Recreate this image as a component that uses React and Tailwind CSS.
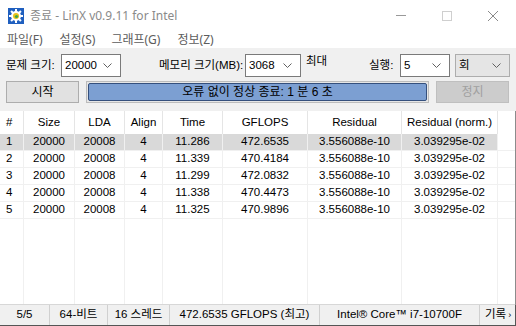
import React from 'react';

const cols = [
  { key: 'n', label: '#', w: 'w-[24px]', align: 'justify-start pl-[6px]' },
  { key: 'size', label: 'Size', w: 'w-[51px]' },
  { key: 'lda', label: 'LDA', w: 'w-[50px]' },
  { key: 'align', label: 'Align', w: 'w-[38px]' },
  { key: 'time', label: 'Time', w: 'w-[60px]' },
  { key: 'gflops', label: 'GFLOPS', w: 'w-[85px]' },
  { key: 'res', label: 'Residual', w: 'w-[94px]' },
  { key: 'norm', label: 'Residual (norm.)', w: 'w-[96px]' },
];

const rows = [
  { n: '1', size: '20000', lda: '20008', align: '4', time: '11.286', gflops: '472.6535', res: '3.556088e-10', norm: '3.039295e-02' },
  { n: '2', size: '20000', lda: '20008', align: '4', time: '11.339', gflops: '470.4184', res: '3.556088e-10', norm: '3.039295e-02' },
  { n: '3', size: '20000', lda: '20008', align: '4', time: '11.299', gflops: '472.0832', res: '3.556088e-10', norm: '3.039295e-02' },
  { n: '4', size: '20000', lda: '20008', align: '4', time: '11.338', gflops: '470.4473', res: '3.556088e-10', norm: '3.039295e-02' },
  { n: '5', size: '20000', lda: '20008', align: '4', time: '11.325', gflops: '470.9896', res: '3.556088e-10', norm: '3.039295e-02' },
];

const Chevron = () => (
  <svg width="9" height="5" viewBox="0 0 9 5" className="shrink-0">
    <path d="M0.5 0.5 L4.5 4.5 L8.5 0.5" fill="none" stroke="#606060" strokeWidth="1" />
  </svg>
);

const Combo = ({ value, width, gray }) => (
  <div className={`${width} h-[23px] flex items-center justify-between pl-[3px] pr-[8px] border text-[11.5px] ${gray ? 'bg-[#e5e5e5] border-[#adadad]' : 'bg-white border-[#7a7a7a]'}`}>
    <span>{value}</span>
    <Chevron />
  </div>
);

const AppIcon = () => (
  <svg width="16" height="16" viewBox="0 0 16 16">
    <rect x="0" y="0" width="16" height="16" fill="#1f5fbf" />
    <g fill="#ffffff">
      <circle cx="8" cy="8" r="5" />
      <rect x="7" y="1" width="2" height="14" />
      <rect x="1" y="7" width="14" height="2" />
      <rect x="7" y="1" width="2" height="14" transform="rotate(45 8 8)" />
      <rect x="7" y="1" width="2" height="14" transform="rotate(-45 8 8)" />
    </g>
    <circle cx="8" cy="8" r="3" fill="#e8c21a" />
    <circle cx="8.5" cy="8.5" r="1.6" fill="#3fa64a" />
  </svg>
);

export default function App() {
  return (
    <div className="w-[516px] h-[326px] flex flex-col bg-white overflow-hidden text-[11.5px] text-black font-['Liberation_Sans','Noto_Sans_CJK_KR',sans-serif] leading-none">
      {/* title bar */}
      <div className="h-[31px] flex items-center shrink-0 font-['Noto_Sans','Noto_Sans_CJK_KR',sans-serif]">
        <div className="ml-[8px] mr-[6px]"><AppIcon /></div>
        <span className="text-[#8a8a8a] text-[12px]">종료 - LinX v0.9.11 for Intel</span>
        <div className="ml-auto flex items-center h-full">
          <div className="w-[46px] h-full flex items-center justify-center">
            <div className="w-[10px] h-px bg-[#999]" />
          </div>
          <div className="w-[46px] h-full flex items-center justify-center">
            <div className="w-[10px] h-[10px] border border-[#cfcfcf]" />
          </div>
          <div className="w-[46px] h-full flex items-center justify-center">
            <svg width="10" height="10" viewBox="0 0 10 10">
              <path d="M0 0 L10 10 M10 0 L0 10" stroke="#8a8a8a" strokeWidth="1" />
            </svg>
          </div>
        </div>
      </div>

      {/* menu bar */}
      <div className="h-[17px] flex items-center shrink-0 text-[#5c5c5c] text-[12px] font-['Noto_Sans','Noto_Sans_CJK_KR',sans-serif]">
        <span className="ml-[7px]">파일(F)</span>
        <span className="ml-[17px]">설정(S)</span>
        <span className="ml-[16px]">그래프(G)</span>
        <span className="ml-[17px]">정보(Z)</span>
      </div>

      {/* toolbar */}
      <div className="h-[63px] shrink-0 bg-[#f0f0f0] pt-[6px]">
        <div className="flex items-center h-[23px] whitespace-nowrap">
          <span className="ml-[6px] w-[55px]">문제 크기:</span>
          <Combo value="20000" width="w-[60px]" />
          <span className="ml-[38px] w-[86px]">메모리 크기(MB):</span>
          <Combo value="3068" width="w-[56px]" />
          <span className="ml-[5px] w-[63px] self-start pt-[2px]">최대</span>
          <span className="w-[31px]">실행:</span>
          <Combo value="5" width="w-[50px]" />
          <div className="ml-[5px]"><Combo value="회" width="w-[55px]" gray /></div>
        </div>
        <div className="flex items-center h-[22px] mt-[4px] text-[12px]">
          <button className="ml-[6px] w-[73px] h-full bg-[#e1e1e1] border border-[#adadad]">시작</button>
          <div className="ml-[7px] w-[343px] h-full border border-[#bcbcbc] bg-[#e6e6e6] p-px">
            <div className="w-full h-full rounded-[2px] border border-[#35507d] bg-[#7c9fd2] flex items-center justify-center">
              오류 없이 정상 종료: 1 분 6 초
            </div>
          </div>
          <button className="ml-[7px] w-[73px] h-full bg-[#cccccc] border border-[#bfbfbf] text-[#a0a0a0]">정지</button>
        </div>
      </div>

      {/* table */}
      <div className="flex-1 flex flex-col border-r border-[#8c8c8c] min-h-0 text-[11.5px]">
        <div className="flex h-[23px] shrink-0">
          {cols.map(c => (
            <div key={c.key} className={`${c.w} shrink-0 flex items-center ${c.align || 'justify-center'} border-r border-[#e5e5e5]`}>
              {c.label}
            </div>
          ))}
          <div className="flex-1" />
        </div>
        {rows.map((r, i) => (
          <div key={r.n} className="flex h-[17px] shrink-0 border-b border-[#f0f0f0]">
            {cols.map(c => (
              <div key={c.key} className={`${c.w} shrink-0 flex items-center ${c.align || 'justify-center'} border-r border-[#f0f0f0] ${i === 0 ? 'bg-[#d9d9d9]' : ''}`}>
                {r[c.key]}
              </div>
            ))}
            <div className="flex-1" />
          </div>
        ))}
        <div className="flex flex-1">
          {cols.map(c => (
            <div key={c.key} className={`${c.w} shrink-0 border-r border-[#f0f0f0]`} />
          ))}
          <div className="flex-1" />
        </div>
      </div>

      {/* status bar */}
      <div className="h-[22px] shrink-0 flex items-center bg-[#f0f0f0] border-t border-[#d7d7d7] border-r border-b border-r-[#555] border-b-[#555] text-[11.5px] whitespace-nowrap">
        <div className="w-[50px] h-full flex items-center justify-center border-r border-[#d0d0d0]">5/5</div>
        <div className="w-[58px] h-full flex items-center justify-center border-r border-[#d0d0d0]">64-비트</div>
        <div className="w-[62px] h-full flex items-center justify-center border-r border-[#d0d0d0]">16 스레드</div>
        <div className="w-[150px] h-full flex items-center justify-center border-r border-[#d0d0d0]">472.6535 GFLOPS (최고)</div>
        <div className="w-[160px] h-full flex items-center justify-center border-r border-[#d0d0d0]">Intel® Core™ i7-10700F</div>
        <div className="flex-1 h-full flex items-center pl-[5px]">기록 <span className="text-[9px] ml-[2px]">›</span></div>
      </div>
    </div>
  );
}
